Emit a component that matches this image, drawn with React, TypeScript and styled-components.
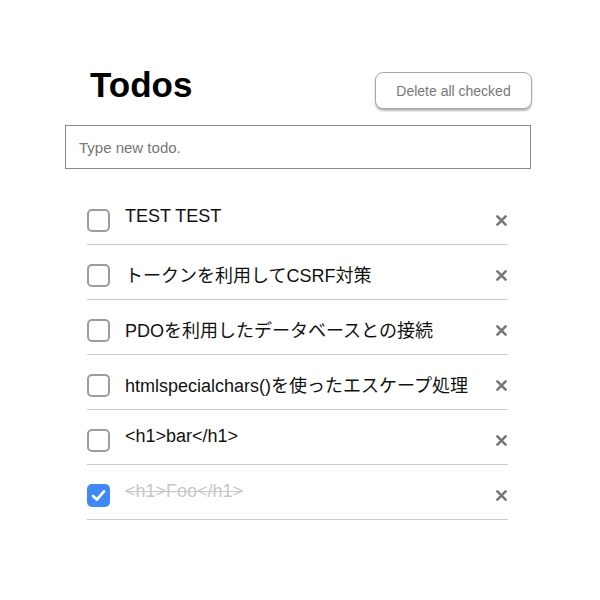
import React, { useState } from "react"
import styled, { createGlobalStyle } from "styled-components"

type Todo = { id: number; title: string; done: boolean }

const initialTodos: Todo[] = [
  { id: 1, title: "TEST TEST", done: false },
  { id: 2, title: "トークンを利用してCSRF対策", done: false },
  { id: 3, title: "PDOを利用したデータベースとの接続", done: false },
  { id: 4, title: "htmlspecialchars()を使ったエスケープ処理", done: false },
  { id: 5, title: "<h1>bar</h1>", done: false },
  { id: 6, title: "<h1>Foo</h1>", done: true },
]

const GlobalStyle = createGlobalStyle`
  html, body {
    margin: 0;
    padding: 0;
    background: #fff;
  }
  body {
    font-family: "Liberation Sans", Arial, "Noto Sans CJK JP", sans-serif;
    color: #111;
  }
`

const Container = styled.div`
  width: 467px;
  margin-left: 65px;
  padding-top: 65px;
`

const Header = styled.div`
  display: flex;
  justify-content: space-between;
  align-items: flex-start;
`

const Title = styled.h1`
  margin: 0 0 0 25px;
  font-size: 35px;
  font-weight: 700;
  line-height: normal;
  color: #000;
`

const PurgeButton = styled.button`
  margin-top: 7px;
  width: 157px;
  height: 37px;
  padding: 0;
  border: 1px solid #a8a8a8;
  border-radius: 8px;
  background: #fff;
  box-shadow: 0 2px 2px rgba(0, 0, 0, 0.28);
  font-family: inherit;
  font-size: 14px;
  color: #777;
  cursor: pointer;
`

const NewTodo = styled.input`
  display: block;
  box-sizing: border-box;
  width: 466px;
  height: 44px;
  margin-top: 16px;
  padding: 0 13px;
  border: 1px solid #888;
  border-radius: 0;
  font-family: inherit;
  font-size: 15px;
  color: #111;
  outline: none;

  &::placeholder {
    color: #777;
  }
`

const List = styled.ul`
  list-style: none;
  margin: 21px 24px 0 22px;
  padding: 0;
`

const Row = styled.li`
  box-sizing: border-box;
  display: flex;
  align-items: flex-start;
  height: 55px;
  padding-top: 16px;
  border-bottom: 1px solid #cbcbcb;
`

const Check = styled.span<{ $checked: boolean }>`
  box-sizing: border-box;
  flex: none;
  display: flex;
  align-items: center;
  justify-content: center;
  width: 23px;
  height: 23px;
  margin-top: 3px;
  border-radius: 5px;
  border: ${(p) => (p.$checked ? "none" : "2px solid #9c9c9c")};
  background: ${(p) => (p.$checked ? "#3f88f5" : "#fff")};
  cursor: pointer;
`

const Label = styled.span<{ $done: boolean }>`
  flex: 1;
  margin-left: 15px;
  font-size: 18px;
  line-height: normal;
  color: ${(p) => (p.$done ? "#c8c8c8" : "#111")};
  text-decoration: ${(p) => (p.$done ? "line-through" : "none")};
`

const DeleteButton = styled.button`
  flex: none;
  display: flex;
  align-items: center;
  justify-content: center;
  width: 14px;
  height: 23px;
  margin-top: 3px;
  padding: 0;
  border: none;
  background: none;
  cursor: pointer;
`

const TodoApp: React.FC = () => {
  const [todos, setTodos] = useState<Todo[]>(initialTodos)
  const [text, setText] = useState("")

  const toggle = (id: number) =>
    setTodos(todos.map((t) => (t.id === id ? { ...t, done: !t.done } : t)))

  const remove = (id: number) => setTodos(todos.filter((t) => t.id !== id))

  return (
    <Container>
      <Header>
        <Title>Todos</Title>
        <PurgeButton onClick={() => setTodos(todos.filter((t) => !t.done))}>
          Delete all checked
        </PurgeButton>
      </Header>
      <NewTodo
        placeholder="Type new todo."
        value={text}
        onChange={(e) => setText(e.target.value)}
      />
      <List>
        {todos.map((todo) => (
          <Row key={todo.id}>
            <Check $checked={todo.done} onClick={() => toggle(todo.id)}>
              {todo.done && (
                <svg width="15" height="13" viewBox="0 0 15 13">
                  <path
                    d="M2 7 L5.8 10.6 L13 2.4"
                    fill="none"
                    stroke="#fff"
                    strokeWidth="2.8"
                    strokeLinecap="round"
                    strokeLinejoin="round"
                  />
                </svg>
              )}
            </Check>
            <Label $done={todo.done}>{todo.title}</Label>
            <DeleteButton onClick={() => remove(todo.id)}>
              <svg width="11" height="11" viewBox="0 0 11 11">
                <path
                  d="M1.4 1.4 L9.6 9.6 M9.6 1.4 L1.4 9.6"
                  stroke="#777"
                  strokeWidth="2.6"
                  strokeLinecap="round"
                />
              </svg>
            </DeleteButton>
          </Row>
        ))}
      </List>
    </Container>
  )
}

const App = () => {
  return (
    <>
      <GlobalStyle />
      <TodoApp />
    </>
  )
}

export default App
